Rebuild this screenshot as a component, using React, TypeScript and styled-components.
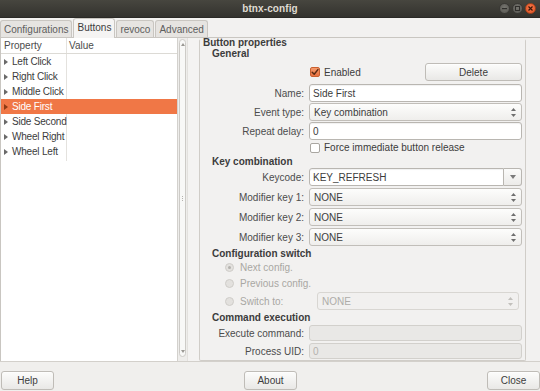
import React from "react";
import styled, { createGlobalStyle } from "styled-components";

const GlobalStyle = createGlobalStyle`
  html, body {
    margin: 0;
    padding: 0;
  }
  body {
    background: #f2f1f0;
    font-family: "Liberation Sans", Arial, sans-serif;
    font-size: 10px;
    color: #3c3c3c;
  }
  #root {
    width: 540px;
    height: 391px;
    overflow: hidden;
  }
`;

const Window = styled.div`
  width: 540px;
  height: 391px;
  display: flex;
  flex-direction: column;
  background: #f2f1f0;
`;

// ---- title bar ----

const TitleBar = styled.div`
  height: 18px;
  flex: none;
  display: grid;
  grid-template-columns: 1fr auto 1fr;
  align-items: center;
  background: linear-gradient(#47463f, #33322e);
  border-bottom: 1px solid #2a2926;
  box-sizing: border-box;
`;

const Title = styled.div`
  grid-column: 2;
  color: #dfdbd2;
  font-weight: bold;
  font-size: 10px;
  letter-spacing: 0.1px;
`;

const WinButtons = styled.div`
  grid-column: 3;
  justify-self: end;
  display: flex;
  gap: 2px;
  padding-right: 4px;
`;

const WinButton = styled.div<{ $close?: boolean }>`
  width: 11px;
  height: 11px;
  border-radius: 50%;
  box-sizing: border-box;
  display: flex;
  align-items: center;
  justify-content: center;
  border: 1px solid ${(p) => (p.$close ? "#a8421c" : "#3a3935")};
  background: ${(p) =>
    p.$close
      ? "radial-gradient(circle at 50% 40%, #f6784a, #e05325)"
      : "radial-gradient(circle at 50% 40%, #76756f, #55544f)"};
`;

// ---- tabs ----

const TabBar = styled.div`
  height: 19px;
  flex: none;
  display: flex;
  align-items: flex-end;
  gap: 1px;
`;

const Tab = styled.div<{ $active?: boolean }>`
  height: ${(p) => (p.$active ? "20px" : "17px")};
  margin-bottom: ${(p) => (p.$active ? "-1px" : "0")};
  position: relative;
  z-index: ${(p) => (p.$active ? 1 : 0)};
  box-sizing: border-box;
  padding: 0 3px;
  display: flex;
  align-items: center;
  padding-top: ${(p) => (p.$active ? "0" : "1px")};
  padding-bottom: ${(p) => (p.$active ? "3px" : "0")};
  border: 1px solid #c9c6c1;
  border-bottom: none;
  border-radius: 3px 3px 0 0;
  background: ${(p) => (p.$active ? "#f5f4f3" : "#e6e4e1")};
  color: ${(p) => (p.$active ? "#3c3c3c" : "#5e5e5e")};
`;

// ---- notebook page ----

const Page = styled.div`
  height: 325px;
  flex: none;
  box-sizing: border-box;
  display: flex;
  border-top: 1px solid #c9c6c1;
  border-bottom: 1px solid #d3d0cb;
  background: #f2f1f0;
`;

const Tree = styled.div`
  width: 177px;
  flex: none;
  box-sizing: border-box;
  border-left: 1px solid #c9c6c1;
  background: #ffffff;
  display: flex;
  flex-direction: column;
`;

const TreeRow = styled.div<{ $header?: boolean; $selected?: boolean }>`
  height: ${(p) => (p.$header ? "16px" : "15px")};
  display: flex;
  align-items: stretch;
  box-sizing: border-box;
  border-bottom: ${(p) => (p.$header ? "1px solid #dcdad5" : "none")};
  background: ${(p) => (p.$selected ? "#f07746" : "transparent")};
  color: ${(p) => (p.$selected ? "#ffffff" : "#3c3c3c")};
  letter-spacing: -0.2px;
`;

const PropCell = styled.div<{ $selected?: boolean }>`
  width: 66px;
  flex: none;
  box-sizing: border-box;
  display: flex;
  align-items: center;
  gap: 4px;
  padding-left: 3px;
  border-right: 1px solid ${(p) => (p.$selected ? "transparent" : "#e4e2de")};
  white-space: nowrap;
  overflow: visible;
  svg {
    flex: none;
  }
`;

const ValueCell = styled.div`
  flex: 1;
  display: flex;
  align-items: center;
  padding-left: 2px;
`;

const HeaderText = styled.span`
  color: #4c4c4c;
  letter-spacing: 0;
`;

const Expander = ({ selected }: { selected?: boolean }) => (
  <svg width="4" height="6" viewBox="0 0 4 6">
    <polygon points="0,0 4,3 0,6" fill={selected ? "#8c3a14" : "#6a6a6a"} />
  </svg>
);

const TreeFill = styled.div`
  flex: 1;
  display: flex;
`;

const FillCol = styled.div`
  width: 66px;
  height: 2px;
  box-sizing: border-box;
  border-right: 1px solid #e4e2de;
`;

const ScrollTrack = styled.div`
  width: 10px;
  flex: none;
  box-sizing: border-box;
  border-left: 1px solid #d3d1cd;
  background: #eeedeb;
  display: flex;
  padding: 1px 1px 4px 1px;
`;

const ScrollThumb = styled.div`
  flex: 1;
  box-sizing: border-box;
  border: 1px solid #cdcbc7;
  border-radius: 4px;
  background: #f8f8f7;
  display: flex;
  flex-direction: column;
  align-items: center;
  justify-content: space-between;
  padding: 3px 0;
`;

const Grip = styled.div`
  display: flex;
  flex-direction: column;
  gap: 1px;
`;

const GripDot = styled.div`
  width: 1px;
  height: 1px;
  background: #b4b2ae;
`;

const PaneHandle = styled.div`
  width: 12px;
  flex: none;
  box-sizing: border-box;
  border-left: 1px solid #e3e1de;
  background: #f4f3f2;
`;

// ---- right panel ----

const Panel = styled.div`
  width: 327px;
  flex: none;
  margin-top: 1px;
  box-sizing: border-box;
  border: 1px solid #d0cdc8;
  border-top-color: transparent;
  border-radius: 2px;
  display: flex;
  flex-direction: column;
  padding: 0 3px 0 0;
`;

const PanelTitle = styled.div`
  height: 11px;
  line-height: 11px;
  margin-top: -3px;
  padding-left: 3px;
  font-weight: bold;
  color: #3c3c3c;
`;

const Section = styled.div`
  display: flex;
  flex-direction: column;
  padding-left: 12px;
`;

const SectionTitle = styled.div<{ $mt?: number }>`
  height: 12px;
  line-height: 12px;
  margin-top: ${(p) => p.$mt ?? 0}px;
  font-weight: bold;
  color: #3c3c3c;
`;

const FormRow = styled.div<{ $h?: number; $mt?: number }>`
  display: grid;
  grid-template-columns: 92px 213px;
  column-gap: 5px;
  height: ${(p) => p.$h ?? 18}px;
  margin-top: ${(p) => p.$mt ?? 0}px;
`;

const Label = styled.div`
  grid-column: 1;
  display: flex;
  align-items: center;
  justify-content: flex-end;
  color: #4c4c4c;
  white-space: nowrap;
`;

const Field = styled.div`
  grid-column: 2;
  display: flex;
  align-items: center;
  min-width: 0;
`;

const Spacer = styled.div`
  flex: 1;
`;

const Entry = styled.div<{ $disabled?: boolean }>`
  flex: 1;
  align-self: stretch;
  box-sizing: border-box;
  display: flex;
  align-items: center;
  padding-left: 3px;
  border: 1px solid ${(p) => (p.$disabled ? "#d2d0cc" : "#b9b6b1")};
  border-radius: 3px;
  background: ${(p) => (p.$disabled ? "#e9e8e6" : "#ffffff")};
  color: ${(p) => (p.$disabled ? "#b4b2ae" : "#3c3c3c")};
  box-shadow: ${(p) =>
    p.$disabled ? "none" : "inset 0 1px 1px rgba(0, 0, 0, 0.06)"};
`;

const Combo = styled.div<{ $disabled?: boolean }>`
  flex: 1;
  align-self: stretch;
  box-sizing: border-box;
  display: flex;
  align-items: center;
  justify-content: space-between;
  padding: 0 5px 0 4px;
  border: 1px solid ${(p) => (p.$disabled ? "#d8d6d2" : "#c1beb9")};
  border-radius: 3px;
  background: ${(p) =>
    p.$disabled ? "#f1f0ef" : "linear-gradient(#fdfdfc, #efeeec)"};
  color: ${(p) => (p.$disabled ? "#aeaca8" : "#3c3c3c")};
`;

const ComboEntryText = styled(Entry)`
  border-radius: 3px 0 0 3px;
`;

const ComboEntryButton = styled.div`
  width: 18px;
  flex: none;
  align-self: stretch;
  box-sizing: border-box;
  display: flex;
  align-items: center;
  justify-content: center;
  border: 1px solid #b9b6b1;
  border-left: none;
  border-radius: 0 3px 3px 0;
  background: linear-gradient(#fbfbfa, #ecebe9);
`;

const Button = styled.div<{ $w?: number }>`
  width: ${(p) => p.$w ?? 53}px;
  height: 100%;
  box-sizing: border-box;
  display: flex;
  align-items: center;
  justify-content: center;
  border: 1px solid #bfbcb7;
  border-radius: 3px;
  background: linear-gradient(#fcfcfb, #e9e8e6);
  box-shadow: 0 1px 0 rgba(255, 255, 255, 0.6) inset;
  color: #3c3c3c;
`;

const CheckLine = styled.div<{ $disabled?: boolean }>`
  display: flex;
  align-items: center;
  gap: 4px;
  padding-left: 1px;
  color: ${(p) => (p.$disabled ? "#a9a7a3" : "#3c3c3c")};
  white-space: nowrap;
`;

const CheckBox = styled.div<{ $checked?: boolean }>`
  width: 10px;
  height: 10px;
  flex: none;
  box-sizing: border-box;
  border-radius: 2px;
  display: flex;
  align-items: center;
  justify-content: center;
  border: 1px solid ${(p) => (p.$checked ? "#c9602f" : "#a9a6a1")};
  background: ${(p) =>
    p.$checked ? "linear-gradient(#f59a6c, #e8713f)" : "#ffffff"};
`;

const Radio = styled.div<{ $on?: boolean }>`
  width: 9px;
  height: 9px;
  flex: none;
  box-sizing: border-box;
  border-radius: 50%;
  border: 1px solid #cfcdc9;
  background: #e3e1de;
  display: flex;
  align-items: center;
  justify-content: center;
  &::after {
    content: "";
    width: 3px;
    height: 3px;
    border-radius: 50%;
    background: ${(p) => (p.$on ? "#b3b1ad" : "transparent")};
  }
`;

const RadioRow = styled.div<{ $mt?: number; $h?: number }>`
  display: flex;
  align-items: center;
  height: ${(p) => p.$h ?? 15}px;
  margin-top: ${(p) => p.$mt ?? 0}px;
  padding-left: 13px;
`;

const RadioLabel = styled.div<{ $w?: number }>`
  display: flex;
  align-items: center;
  gap: 6px;
  color: #a9a7a3;
  width: ${(p) => (p.$w ? `${p.$w}px` : "auto")};
  flex: none;
`;

const SwitchCombo = styled.div`
  flex: 1;
  align-self: stretch;
  display: flex;
  padding-right: 3px;
`;

// ---- bottom bar ----

const BottomBar = styled.div`
  height: 29px;
  flex: none;
  box-sizing: border-box;
  padding: 9px 0 1px 1px;
  display: flex;
  justify-content: space-between;
  background: #f0efed;
`;

// ---- small drawings ----

const UpDown = ({ color = "#6f6f6f" }: { color?: string }) => (
  <svg width="5" height="9" viewBox="0 0 5 9">
    <polygon points="2.5,0 5,3 0,3" fill={color} />
    <polygon points="0,6 5,6 2.5,9" fill={color} />
  </svg>
);

const DownArrow = () => (
  <svg width="6" height="4" viewBox="0 0 6 4">
    <polygon points="0,0 6,0 3,4" fill="#7a7a7a" />
  </svg>
);

const ScrollArrow = ({ up }: { up?: boolean }) => (
  <svg width="4" height="3" viewBox="0 0 4 3">
    <polygon points={up ? "2,0 4,3 0,3" : "0,0 4,0 2,3"} fill="#9a9894" />
  </svg>
);

const CheckMark = () => (
  <svg width="8" height="8" viewBox="0 0 8 8">
    <path
      d="M1.2 4.2 L3.2 6.2 L6.9 1.6"
      fill="none"
      stroke="#5a2a12"
      strokeWidth="1.5"
      strokeLinecap="round"
      strokeLinejoin="round"
    />
  </svg>
);

const MinIcon = () => (
  <svg width="5" height="5" viewBox="0 0 5 5">
    <rect x="0" y="2" width="5" height="1.2" fill="#2f2e2b" />
  </svg>
);

const MaxIcon = () => (
  <svg width="5" height="5" viewBox="0 0 5 5">
    <rect x="0.5" y="0.5" width="4" height="4" fill="none" stroke="#2f2e2b" strokeWidth="1" />
  </svg>
);

const CloseIcon = () => (
  <svg width="5" height="5" viewBox="0 0 5 5">
    <path d="M0.5 0.5 L4.5 4.5 M4.5 0.5 L0.5 4.5" stroke="#3b1608" strokeWidth="1.2" />
  </svg>
);

const buttons = [
  "Left Click",
  "Right Click",
  "Middle Click",
  "Side First",
  "Side Second",
  "Wheel Right",
  "Wheel Left",
];
const selectedButton = "Side First";

export default function App() {
  return (
    <>
      <GlobalStyle />
      <Window>
        <TitleBar>
          <Title>btnx-config</Title>
          <WinButtons>
            <WinButton>
              <MinIcon />
            </WinButton>
            <WinButton>
              <MaxIcon />
            </WinButton>
            <WinButton $close>
              <CloseIcon />
            </WinButton>
          </WinButtons>
        </TitleBar>

        <TabBar>
          <Tab>Configurations</Tab>
          <Tab $active>Buttons</Tab>
          <Tab>revoco</Tab>
          <Tab>Advanced</Tab>
        </TabBar>

        <Page>
          <Tree>
            <TreeRow $header>
              <PropCell>
                <HeaderText>Property</HeaderText>
              </PropCell>
              <ValueCell>
                <HeaderText>Value</HeaderText>
              </ValueCell>
            </TreeRow>
            {buttons.map((b) => {
              const sel = b === selectedButton;
              return (
                <TreeRow key={b} $selected={sel}>
                  <PropCell $selected={sel}>
                    <Expander selected={sel} />
                    {b}
                  </PropCell>
                  <ValueCell />
                </TreeRow>
              );
            })}
            <TreeFill>
              <FillCol />
            </TreeFill>
          </Tree>
          <ScrollTrack>
            <ScrollThumb>
              <ScrollArrow up />
              <Grip>
                <GripDot />
                <GripDot />
                <GripDot />
              </Grip>
              <ScrollArrow />
            </ScrollThumb>
          </ScrollTrack>
          <PaneHandle />

          <Panel>
            <PanelTitle>Button properties</PanelTitle>
            <Section>
              <SectionTitle>General</SectionTitle>
              <FormRow $mt={3}>
                <Field>
                  <CheckLine>
                    <CheckBox $checked>
                      <CheckMark />
                    </CheckBox>
                    Enabled
                  </CheckLine>
                  <Spacer />
                  <Button $w={97}>Delete</Button>
                </Field>
              </FormRow>
              <FormRow $mt={3}>
                <Label>Name:</Label>
                <Field>
                  <Entry>Side First</Entry>
                </Field>
              </FormRow>
              <FormRow $mt={1}>
                <Label>Event type:</Label>
                <Field>
                  <Combo>
                    Key combination
                    <UpDown />
                  </Combo>
                </Field>
              </FormRow>
              <FormRow $mt={1}>
                <Label>Repeat delay:</Label>
                <Field>
                  <Entry>0</Entry>
                </Field>
              </FormRow>
              <FormRow $h={15}>
                <Field>
                  <CheckLine>
                    <CheckBox />
                    Force immediate button release
                  </CheckLine>
                </Field>
              </FormRow>

              <SectionTitle $mt={1}>Key combination</SectionTitle>
              <FormRow>
                <Label>Keycode:</Label>
                <Field>
                  <ComboEntryText>KEY_REFRESH</ComboEntryText>
                  <ComboEntryButton>
                    <DownArrow />
                  </ComboEntryButton>
                </Field>
              </FormRow>
              {[1, 2, 3].map((n) => (
                <FormRow key={n} $mt={2}>
                  <Label>Modifier key {n}:</Label>
                  <Field>
                    <Combo>
                      NONE
                      <UpDown />
                    </Combo>
                  </Field>
                </FormRow>
              ))}

              <SectionTitle $mt={2}>Configuration switch</SectionTitle>
              <RadioRow>
                <RadioLabel>
                  <Radio $on />
                  Next config.
                </RadioLabel>
              </RadioRow>
              <RadioRow $mt={1}>
                <RadioLabel>
                  <Radio />
                  Previous config.
                </RadioLabel>
              </RadioRow>
              <RadioRow $mt={1} $h={18}>
                <RadioLabel $w={92}>
                  <Radio />
                  Switch to:
                </RadioLabel>
                <SwitchCombo>
                  <Combo $disabled>
                    NONE
                    <UpDown color="#c2c0bc" />
                  </Combo>
                </SwitchCombo>
              </RadioRow>

              <SectionTitle $mt={2}>Command execution</SectionTitle>
              <FormRow $h={16} $mt={1}>
                <Label>Execute command:</Label>
                <Field>
                  <Entry $disabled />
                </Field>
              </FormRow>
              <FormRow $h={16} $mt={2}>
                <Label>Process UID:</Label>
                <Field>
                  <Entry $disabled>0</Entry>
                </Field>
              </FormRow>
            </Section>
          </Panel>
        </Page>

        <BottomBar>
          <Button>Help</Button>
          <Button>About</Button>
          <Button>Close</Button>
        </BottomBar>
      </Window>
    </>
  );
}
